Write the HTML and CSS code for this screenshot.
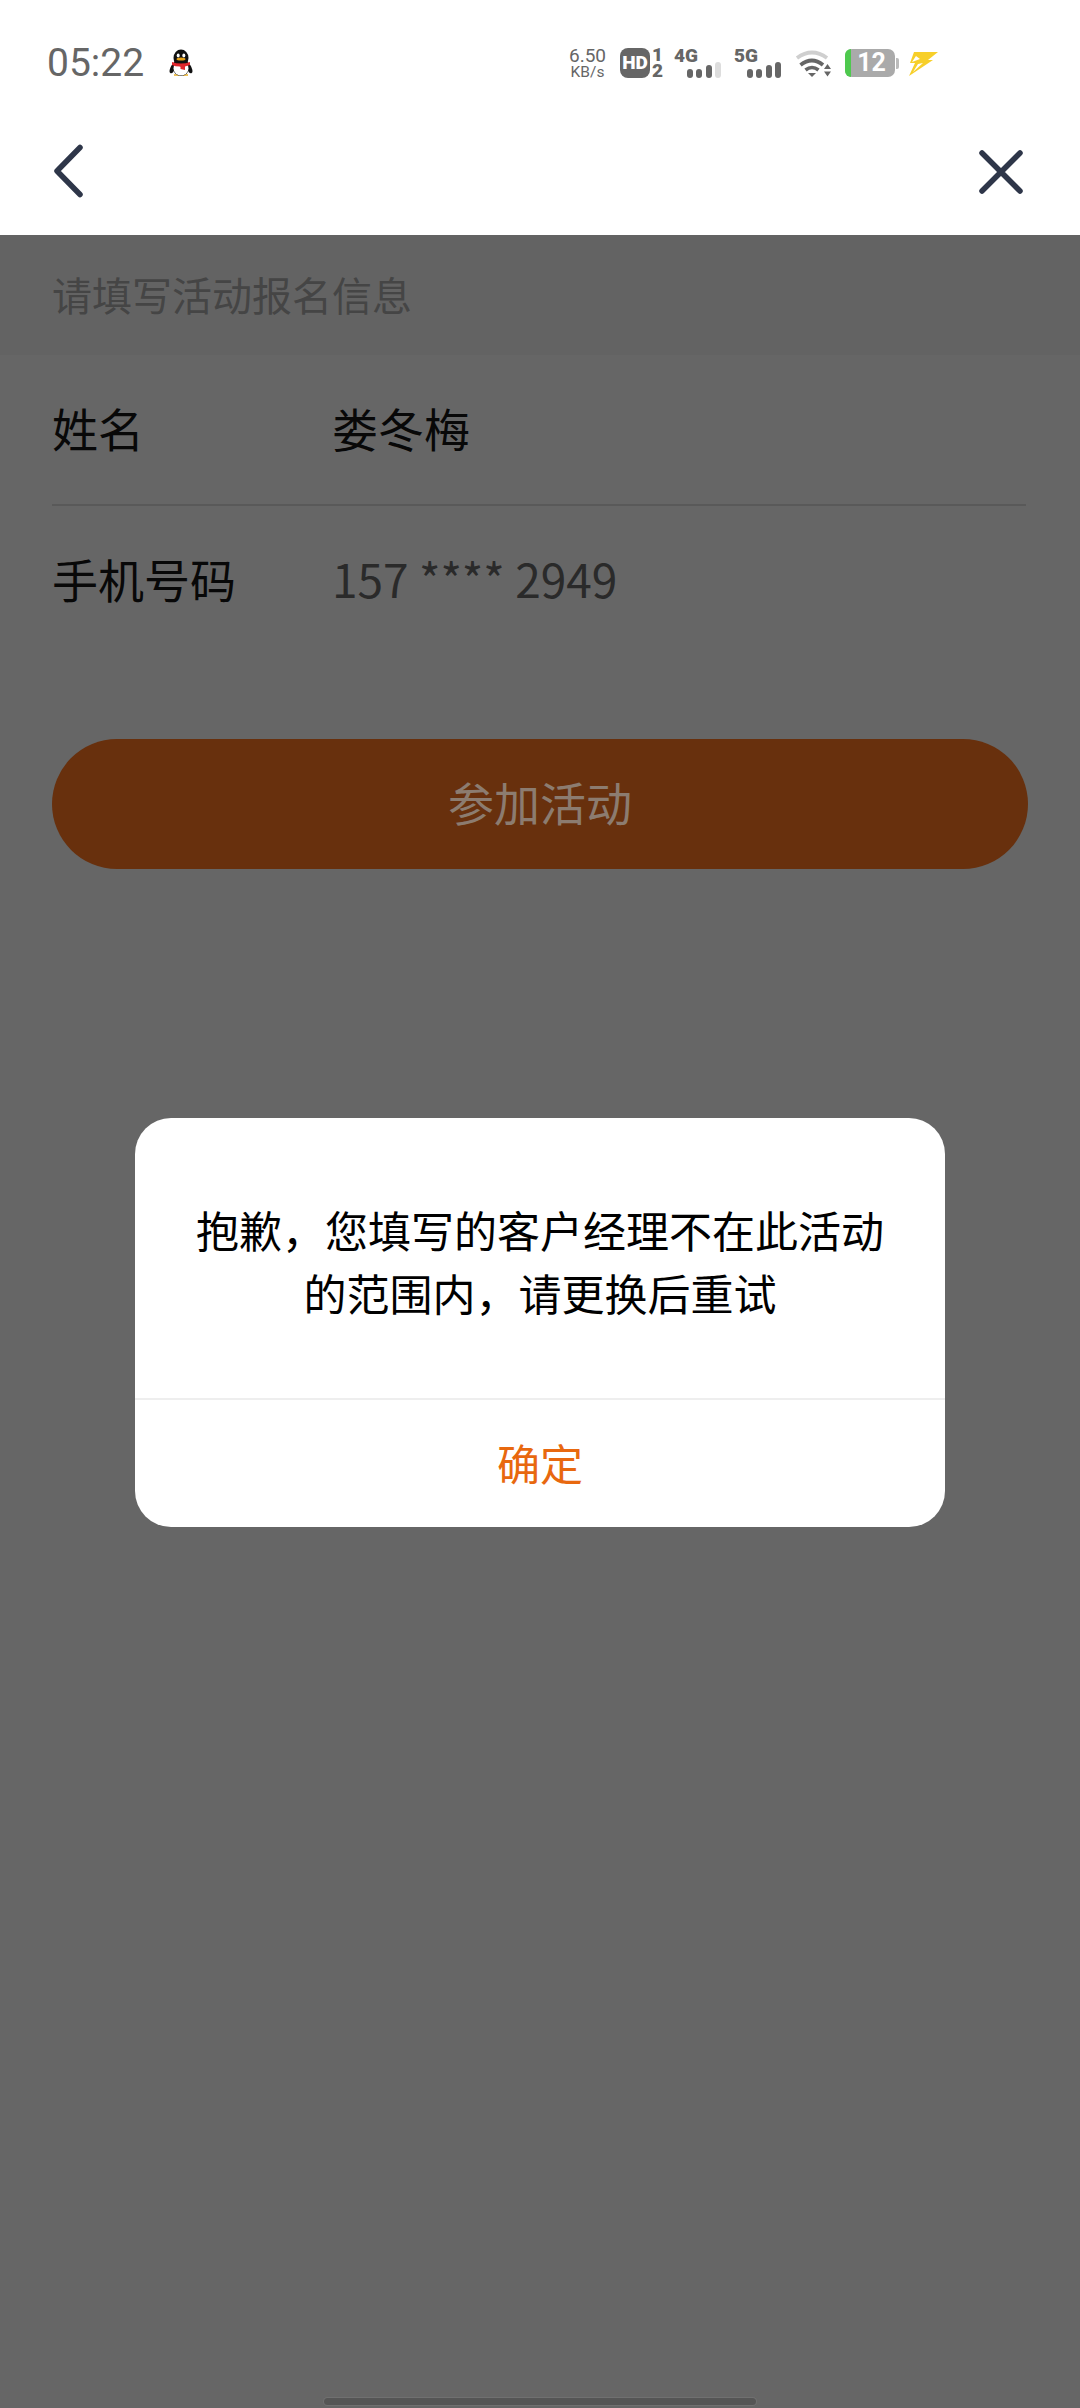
FILE: index.html
```html
<!DOCTYPE html>
<html lang="zh-CN">
<head>
  <meta charset="UTF-8" />
  <meta name="viewport" content="width=device-width, initial-scale=1.0" />
  <title>活动报名</title>
  <link rel="stylesheet" href="styles.css">
</head>
<body>
  <div id="app">
    <!-- Status bar -->
    <div class="status-bar">
      <div class="status-left">
        <span class="clock">05:22</span>
        <svg class="qq" width="24" height="28" viewBox="0 0 24 28">
          <path d="M5 26h5M14 26h5" stroke="#eec25a" stroke-width="2"/>
          <ellipse cx="3.500" cy="19.500" rx="2.300" ry="5" fill="#111" transform="rotate(22 3.500 19.500)"/>
          <ellipse cx="20.500" cy="19.500" rx="2.300" ry="5" fill="#111" transform="rotate(-22 20.500 19.500)"/>
          <ellipse cx="12" cy="18" rx="8.500" ry="9" fill="#111"/>
          <ellipse cx="12" cy="19.500" rx="7.500" ry="7" fill="#fff"/>
          <ellipse cx="12" cy="9" rx="7.500" ry="8.500" fill="#111"/>
          <ellipse cx="9.200" cy="6.500" rx="1.500" ry="2" fill="#fff"/>
          <ellipse cx="14.800" cy="6.500" rx="1.500" ry="2" fill="#fff"/>
          <ellipse cx="12" cy="10" rx="4.500" ry="1.600" fill="#e8a317"/>
          <path d="M3 13q9 3 18 0v3l-5 1.500V21l-4.500-1v-2.500Q6 17.500 3 16z" fill="#e0262b"/>
        </svg>
      </div>
      <div class="status-right">
        <div class="speed"><span class="speed-num">6.50</span><span class="speed-unit">KB/s</span></div>
        <div class="hd">
          <span class="hd-box">HD</span>
          <span class="hd-nums"><span>1</span><span>2</span></span>
        </div>
        <div class="net">
          <span class="net-label">4G</span>
          <div class="bars"><i></i><i></i><i></i><i class="off"></i></div>
        </div>
        <div class="net">
          <span class="net-label">5G</span>
          <div class="bars"><i></i><i></i><i></i><i></i></div>
        </div>
        <svg class="wifi" width="36" height="28" viewBox="0 0 36 28">
          <path d="M2 9Q17 -2 32 9" fill="none" stroke="#cfcfcf" stroke-width="3.800"/>
          <path d="M5.500 16Q17 7 28 16" fill="none" stroke="#666" stroke-width="3.800"/>
          <path d="M10.500 21Q17 16 23.500 21" fill="none" stroke="#666" stroke-width="3.600"/>
          <path d="M13 24h8l-4 4z" fill="#666"/>
          <path d="M29 20l3.500-5 3.500 5zM29 22.500l3.500 5 3.500-5z" fill="#666"/>
        </svg>
        <div class="battery">
          <div class="battery-body"><i class="battery-level"></i><span>12</span></div>
          <i class="battery-cap"></i>
        </div>
        <svg class="bolt" width="30" height="25" viewBox="0 0 30 25">
          <path d="M6 1h24L20 9h5L1 25l6-13H2z" fill="#f7cf2a"/>
          <path d="M8 5 4 11l8-3zM5 21l10-9-5 1z" fill="#fff"/>
        </svg>
      </div>
    </div>

    <!-- Nav bar -->
    <div class="nav-bar">
      <svg width="34" height="56" viewBox="0 0 34 56">
        <path d="M28 3.500L5 27l23 23.500" fill="none" stroke="#2e3649" stroke-width="5.500" stroke-linecap="round" stroke-linejoin="round"/>
      </svg>
      <svg width="46" height="46" viewBox="0 0 46 46">
        <path d="M4 4l38 38M42 4L4 42" fill="none" stroke="#2e3649" stroke-width="5.500" stroke-linecap="round"/>
      </svg>
    </div>

    <!-- Dimmed page -->
    <div class="page">
      <div class="hint">请填写活动报名信息</div>
      <div class="form">
        <div class="row">
          <span class="row-label">姓名</span>
          <span class="row-value name">娄冬梅</span>
        </div>
        <div class="row">
          <span class="row-label">手机号码</span>
          <span class="row-value">157 **** 2949</span>
        </div>
      </div>
      <div class="join-btn">参加活动</div>

      <div class="mask">
        <div class="dialog">
          <div class="dialog-text">抱歉，您填写的客户经理不在此活动的范围内，请更换后重试</div>
          <div class="dialog-btn">确定</div>
        </div>
      </div>
      <div class="home-bar"></div>
    </div>
  </div>
</body>
</html>
```
FILE: styles.css
```css
/* Global styles */
* {
  box-sizing: border-box;
}
body {
  margin: 0;
  background: #666;
  font-family: "Noto Sans CJK SC", "Noto Sans", sans-serif;
}
#app {
  width: 1080px;
  height: 2408px;
  display: flex;
  flex-direction: column;
  overflow: hidden;
}
/* Status bar */
.status-bar {
  height: 112px;
  background: #fff;
  padding: 14px 142px 0 47px;
  display: flex;
  justify-content: space-between;
  align-items: center;
  color: #666;
}
.status-left {
  display: flex;
  align-items: center;
  gap: 25px;
}
.clock {
  font-family: Roboto, sans-serif;
  font-size: 39px;
  line-height: 46px;
}
.status-right {
  display: flex;
  align-items: center;
  font-family: Roboto, sans-serif;
}
.speed {
  display: flex;
  flex-direction: column;
  align-items: center;
  width: 37px;
}
.speed-num {
  font-size: 19px;
  line-height: 18px;
}
.speed-unit {
  font-size: 15.500px;
  line-height: 15px;
}
.hd {
  display: flex;
  align-items: center;
  margin-left: 14px;
}
.hd-box {
  width: 30px;
  height: 30px;
  border-radius: 8px;
  background: #666;
  color: #fff;
  font-size: 19px;
  font-weight: 900;
  line-height: 30px;
  text-align: center;
}
.hd-nums {
  display: flex;
  flex-direction: column;
  font-size: 19px;
  font-weight: 900;
  line-height: 16px;
  margin-left: 2px;
  width: 11px;
}
.net {
  position: relative;
  width: 47px;
  height: 30px;
  margin-left: 11px;
}
.net-label {
  position: absolute;
  left: 0;
  top: -1px;
  font-size: 19px;
  font-weight: 900;
  line-height: 18px;
}
.bars {
  position: absolute;
  right: 0;
  bottom: 0;
  display: flex;
  align-items: flex-end;
  gap: 3.500px;
}
.bars i {
  width: 6px;
  height: 9px;
  border-radius: 3px;
  background: #666;
}
.bars i:nth-child(3) {
  height: 13px;
}
.bars i:nth-child(4) {
  height: 16px;
}
.bars i.off {
  background: #ddd;
}
.net + .net {
  margin-left: 13px;
}
.wifi {
  margin-left: 14px;
}
.battery {
  display: flex;
  align-items: center;
  margin-left: 14px;
}
.battery-body {
  position: relative;
  width: 50px;
  height: 28px;
  border-radius: 7px;
  background: #aaa;
  color: #fff;
  font-size: 25px;
  font-weight: 700;
  line-height: 28px;
  text-align: center;
  padding-left: 3px;
}
.battery-level {
  position: absolute;
  left: 0;
  top: 0;
  width: 6px;
  height: 100%;
  border-radius: 7px 0 0 7px;
  background: #4ec94e;
}
.battery-cap {
  width: 3px;
  height: 11px;
  background: #bbb;
  border-radius: 0 2px 2px 0;
  margin-left: 1px;
}
.bolt {
  margin-left: 9px;
}
/* Nav bar */
.nav-bar {
  height: 123px;
  background: #fff;
  padding: 0 56px 4px 52px;
  display: flex;
  justify-content: space-between;
  align-items: center;
}
/* Dimmed page under the dialog */
.page {
  position: relative;
  flex: 1;
  background: #666;
}
.hint {
  height: 120px;
  padding: 0 52px 3px;
  background: #636363;
  color: #454545;
  font-size: 40px;
  display: flex;
  align-items: center;
}
.form {
  padding: 0 54px 0 52px;
}
.row {
  height: 149px;
  padding-bottom: 5px;
  display: flex;
  align-items: center;
  font-size: 46px;
  color: #080808;
}
.row + .row {
  border-top: 2px solid #595959;
  height: 150px;
}
.row-label {
  width: 280px;
}
.row-value {
  color: #2a2a2a;
}
.row-value.name {
  color: #080808;
}
.join-btn {
  margin: 85px 52px 0;
  height: 130px;
  border-radius: 65px;
  background: #68300d;
  color: #8c7c70;
  font-size: 46px;
  line-height: 124px;
  text-align: center;
}
/* Dialog */
.mask {
  position: absolute;
  inset: 0;
  padding-top: 2px;
  display: flex;
  align-items: center;
  justify-content: center;
}
.dialog {
  width: 810px;
  height: 409px;
  background: #fff;
  border-radius: 36px;
  display: flex;
  flex-direction: column;
}
.dialog-text {
  height: 282px;
  padding: 80px 48px 0;
  border-bottom: 2px solid #eee;
  color: #000;
  font-size: 43px;
  line-height: 63px;
  text-align: center;
}
.dialog-btn {
  flex: 1;
  padding-bottom: 4px;
  display: flex;
  align-items: center;
  justify-content: center;
  color: #e8680f;
  font-size: 43px;
}
.home-bar {
  position: absolute;
  left: 324px;
  right: 324px;
  bottom: 3px;
  height: 7px;
  border-radius: 4px;
  background: #555;
  box-shadow: 0 0 0 1px #707070;
}
```
